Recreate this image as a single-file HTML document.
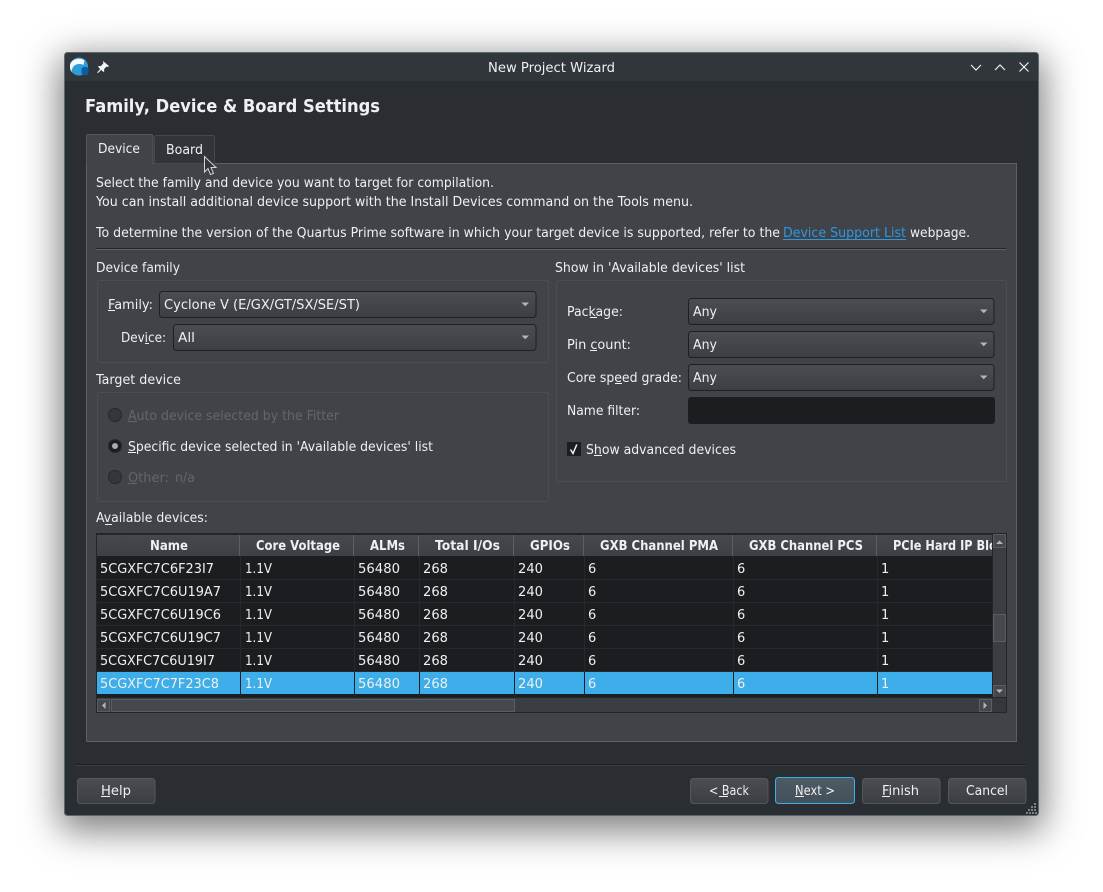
<!DOCTYPE html>
<html><head><meta charset="utf-8">
<style>
html,body{margin:0;padding:0;width:1103px;height:892px;background:#fff;overflow:hidden}
#sh{position:absolute;left:65px;top:53px;width:973px;height:762px;border-radius:4px;box-shadow:0 10px 36px 6px rgba(0,0,0,.5)}
svg{position:absolute;left:0;top:0}
text{font-family:"DejaVu Sans","Liberation Sans",sans-serif;font-size:13px;fill:#eff0f1}
.b{font-weight:bold}
.d{fill:#63676b}
.u{fill:#eff0f1}
.g{fill:none;stroke:#4a4e53}
</style></head><body>
<div id="sh"></div>
<svg width="1103" height="892" viewBox="0 0 1103 892">
<defs>
<linearGradient id="cb" x1="0" y1="0" x2="0" y2="1"><stop offset="0" stop-color="#4a4e52"/><stop offset="1" stop-color="#3b3e43"/></linearGradient>
<linearGradient id="hd" x1="0" y1="0" x2="0" y2="1"><stop offset="0" stop-color="#45484d"/><stop offset="1" stop-color="#3d4045"/></linearGradient>
<linearGradient id="nb" x1="0" y1="0" x2="0" y2="1"><stop offset="0" stop-color="#4d5b64"/><stop offset="1" stop-color="#435059"/></linearGradient>
<clipPath id="hc"><rect x="878" y="535" width="114" height="22"/></clipPath>
</defs>

<!-- window -->
<rect x="64.500" y="52.500" width="974" height="763" rx="3" fill="#2a2e32" stroke="#5a6a72"/>
<path d="M65 81V56q0-3 3-3H1035q3 0 3 3V81Z" fill="#31363b"/>
<text x="488" y="72" textLength="127" lengthAdjust="spacingAndGlyphs">New Project Wizard</text>

<!-- app icon -->
<circle cx="79" cy="66.500" r="9" fill="#2f9ed8"/>
<path d="M70.500 63c3-4.500 10-5.500 14-2.500l-1 4.500c-4-2-9-1-11 3-.7 1.300-1 3-1 4-1.500-2.500-2-6-1-9Z" fill="#f2f8fb"/>
<rect x="81.500" y="67" width="7" height="8" rx="2.500" fill="#0a5da8"/>
<!-- pin -->
<path d="M103 61l6 5-1 1-1.500-.5-2.500 2.800.3 1.900-.9.800-2.200-2.100-3.200 3.200-.8-.7 3-3.300-2.100-2.400.9-.8 1.800.2 2.600-2.800-.4-1.600Z" fill="#f4f5f5"/>
<!-- window buttons -->
<path d="M971 65l5 5 5-5M995 70l5-5 5 5M1019.500 62.500l9 9M1028.500 62.500l-9 9" fill="none" stroke="#eff0f1" stroke-width="1.200"/>

<text class="b" x="85" y="112" textLength="295" lengthAdjust="spacingAndGlyphs" style="font-size:18px">Family, Device &amp; Board Settings</text>

<!-- panel -->
<rect x="86.500" y="163.500" width="930" height="578" fill="#404348" stroke="#5c6065"/>
<!-- tabs -->
<path d="M154.500 163.500V138q0-2.500 2-2.500H213q1.500 0 1.500 2.500V163.500Z" fill="#31353a" stroke="#45494d"/>
<path d="M86.500 164V136.500q0-2 2-2H151q2 0 2 2V164Z" fill="#404348" stroke="#54585c"/>
<rect x="87" y="162" width="65.500" height="3" fill="#404348"/>
<text x="98" y="153" textLength="42" lengthAdjust="spacingAndGlyphs">Device</text>
<text x="166" y="154" textLength="37" lengthAdjust="spacingAndGlyphs">Board</text>

<text x="96" y="187" textLength="398" lengthAdjust="spacingAndGlyphs">Select the family and device you want to target for compilation.</text>
<text x="96" y="206" textLength="597" lengthAdjust="spacingAndGlyphs">You can install additional device support with the Install Devices command on the Tools menu.</text>
<text x="96" y="237" textLength="684" lengthAdjust="spacingAndGlyphs">To determine the version of the Quartus Prime software in which your target device is supported, refer to the</text>
<text x="783" y="237" textLength="123" lengthAdjust="spacingAndGlyphs" style="fill:#2f97e0">Device Support List</text>
<rect x="783" y="239" width="123" height="1" fill="#2f97e0"/>
<text x="910" y="237" textLength="60" lengthAdjust="spacingAndGlyphs">webpage.</text>
<rect x="96" y="248" width="910" height="1" fill="#232629"/>
<rect x="96" y="249" width="910" height="1" fill="#5f6368"/>

<!-- group device family -->
<text x="96" y="272" textLength="84" lengthAdjust="spacingAndGlyphs">Device family</text>
<rect x="97.500" y="280.500" width="451" height="82" rx="2" class="g"/>
<text x="108" y="309" textLength="45" lengthAdjust="spacingAndGlyphs">Family:</text>
<rect x="108" y="310" width="7" height="1" class="u"/>
<rect x="159.500" y="291.500" width="376.500" height="26" rx="3" fill="url(#cb)" stroke="#1d2023"/>
<text x="164" y="309" textLength="196" lengthAdjust="spacingAndGlyphs">Cyclone V (E/GX/GT/SX/SE/ST)</text>
<path d="M521.500 302.500h7.500l-3.750 3.800Z" fill="#b4b6b8"/>
<text x="121" y="342" textLength="45" lengthAdjust="spacingAndGlyphs">Device:</text>
<rect x="145" y="343" width="4" height="1" class="u"/>
<rect x="173.500" y="324.500" width="362.500" height="26" rx="3" fill="url(#cb)" stroke="#1d2023"/>
<text x="178" y="342" textLength="17" lengthAdjust="spacingAndGlyphs">All</text>
<path d="M521.500 335.500h7.500l-3.750 3.800Z" fill="#b4b6b8"/>

<!-- group target device -->
<text x="96" y="384" textLength="85" lengthAdjust="spacingAndGlyphs">Target device</text>
<rect x="97.500" y="392.500" width="451" height="109" rx="2" class="g"/>
<circle cx="115" cy="415" r="6.500" fill="#33373b" stroke="#26292c"/>
<text class="d" x="128" y="420" textLength="211" lengthAdjust="spacingAndGlyphs">Auto device selected by the Fitter</text>
<rect x="128" y="421" width="9" height="1" fill="#63676b"/>
<circle cx="115" cy="446" r="6.500" fill="#1b1e20" stroke="#26292c"/>
<circle cx="115" cy="446" r="3" fill="#a9abad"/>
<text x="128" y="451" textLength="305" lengthAdjust="spacingAndGlyphs">Specific device selected in 'Available devices' list</text>
<rect x="128" y="452" width="8" height="1" class="u"/>
<circle cx="115" cy="477" r="6.500" fill="#33373b" stroke="#26292c"/>
<text class="d" x="128" y="482" textLength="41" lengthAdjust="spacingAndGlyphs">Other:</text>
<text class="d" x="175" y="482" textLength="20" lengthAdjust="spacingAndGlyphs">n/a</text>
<rect x="128" y="483" width="9" height="1" fill="#63676b"/>

<!-- group show in -->
<text x="555" y="272" textLength="190" lengthAdjust="spacingAndGlyphs">Show in 'Available devices' list</text>
<rect x="556.500" y="280.500" width="450" height="201" rx="2" class="g"/>
<text x="567" y="316" textLength="56" lengthAdjust="spacingAndGlyphs">Package:</text>
<rect x="590" y="317" width="7" height="1" class="u"/>
<rect x="688.500" y="298.500" width="305.500" height="26" rx="3" fill="url(#cb)" stroke="#1d2023"/>
<text x="693" y="316" textLength="24" lengthAdjust="spacingAndGlyphs">Any</text>
<path d="M980 309.500h7.500l-3.750 3.800Z" fill="#b4b6b8"/>
<text x="567" y="349" textLength="64" lengthAdjust="spacingAndGlyphs">Pin count:</text>
<rect x="590" y="350" width="7" height="1" class="u"/>
<rect x="688.500" y="331.500" width="305.500" height="26" rx="3" fill="url(#cb)" stroke="#1d2023"/>
<text x="693" y="349" textLength="24" lengthAdjust="spacingAndGlyphs">Any</text>
<path d="M980 342.500h7.500l-3.750 3.800Z" fill="#b4b6b8"/>
<text x="567" y="382" textLength="115" lengthAdjust="spacingAndGlyphs">Core speed grade:</text>
<rect x="615" y="383" width="7" height="1" class="u"/>
<rect x="688.500" y="364.500" width="305.500" height="26" rx="3" fill="url(#cb)" stroke="#1d2023"/>
<text x="693" y="382" textLength="24" lengthAdjust="spacingAndGlyphs">Any</text>
<path d="M980 375.500h7.500l-3.750 3.800Z" fill="#b4b6b8"/>
<text x="567" y="415" textLength="73" lengthAdjust="spacingAndGlyphs">Name filter:</text>
<rect x="688" y="397" width="307" height="27" rx="3" fill="#1b1e20"/>
<rect x="567" y="442" width="14" height="14" fill="#1b1e20"/>
<path d="M570.500 449.500l2.500 4 3.800-9" fill="none" stroke="#eff0f1" stroke-width="1.500"/>
<text x="586" y="454" textLength="150" lengthAdjust="spacingAndGlyphs">Show advanced devices</text>
<rect x="594" y="455" width="8" height="1" class="u"/>

<!-- table -->
<text x="96" y="522" textLength="112" lengthAdjust="spacingAndGlyphs">Available devices:</text>
<rect x="105" y="524" width="7" height="1" class="u"/>
<rect x="96.500" y="533.500" width="910" height="179" fill="#1b1e20" stroke="#232629"/>
<rect x="97" y="535" width="895" height="21" fill="url(#hd)"/>
<rect x="97" y="534" width="909" height="1" fill="#232629"/>
<g fill="#5c6065">
<rect x="239" y="535" width="1" height="21"/><rect x="353" y="535" width="1" height="21"/><rect x="418" y="535" width="1" height="21"/><rect x="513" y="535" width="1" height="21"/><rect x="583" y="535" width="1" height="21"/><rect x="732" y="535" width="1" height="21"/><rect x="876" y="535" width="1" height="21"/>
</g>
<text class="b" x="150" y="550" textLength="38" lengthAdjust="spacingAndGlyphs">Name</text>
<text class="b" x="256" y="550" textLength="84" lengthAdjust="spacingAndGlyphs">Core Voltage</text>
<text class="b" x="370" y="550" textLength="35" lengthAdjust="spacingAndGlyphs">ALMs</text>
<text class="b" x="435" y="550" textLength="65" lengthAdjust="spacingAndGlyphs">Total I/Os</text>
<text class="b" x="530" y="550" textLength="40" lengthAdjust="spacingAndGlyphs">GPIOs</text>
<text class="b" x="600" y="550" textLength="118" lengthAdjust="spacingAndGlyphs">GXB Channel PMA</text>
<text class="b" x="749" y="550" textLength="114" lengthAdjust="spacingAndGlyphs">GXB Channel PCS</text>
<g clip-path="url(#hc)"><text class="b" x="893" y="550" textLength="118" lengthAdjust="spacingAndGlyphs">PCIe Hard IP Block</text></g>

<!-- grid -->
<g fill="#26292d">
<rect x="97" y="579" width="895" height="1"/><rect x="97" y="602" width="895" height="1"/><rect x="97" y="625" width="895" height="1"/><rect x="97" y="648" width="895" height="1"/><rect x="97" y="671" width="895" height="1"/>
<rect x="240" y="556" width="1" height="141"/><rect x="354" y="556" width="1" height="141"/><rect x="419" y="556" width="1" height="141"/><rect x="514" y="556" width="1" height="141"/><rect x="584" y="556" width="1" height="141"/><rect x="733" y="556" width="1" height="141"/><rect x="877" y="556" width="1" height="141"/>
</g>
<rect x="97" y="672" width="895" height="22" fill="#3daee9"/>
<g fill="#1b1e20">
<rect x="240" y="672" width="1" height="22"/><rect x="354" y="672" width="1" height="22"/><rect x="419" y="672" width="1" height="22"/><rect x="514" y="672" width="1" height="22"/><rect x="584" y="672" width="1" height="22"/><rect x="733" y="672" width="1" height="22"/><rect x="877" y="672" width="1" height="22"/>
</g>

<text x="100" y="573" textLength="114" lengthAdjust="spacingAndGlyphs">5CGXFC7C6F23I7</text>
<text x="100" y="596" textLength="121" lengthAdjust="spacingAndGlyphs">5CGXFC7C6U19A7</text>
<text x="100" y="619" textLength="121" lengthAdjust="spacingAndGlyphs">5CGXFC7C6U19C6</text>
<text x="100" y="642" textLength="121" lengthAdjust="spacingAndGlyphs">5CGXFC7C6U19C7</text>
<text x="100" y="665" textLength="115" lengthAdjust="spacingAndGlyphs">5CGXFC7C6U19I7</text>
<text x="100" y="688" textLength="119" lengthAdjust="spacingAndGlyphs">5CGXFC7C7F23C8</text>

<text x="245" y="573" textLength="27" lengthAdjust="spacingAndGlyphs">1.1V</text>
<text x="358" y="573" textLength="42" lengthAdjust="spacingAndGlyphs">56480</text>
<text x="423" y="573" textLength="25" lengthAdjust="spacingAndGlyphs">268</text>
<text x="518" y="573" textLength="25" lengthAdjust="spacingAndGlyphs">240</text>
<text x="588" y="573">6</text><text x="737" y="573">6</text><text x="881" y="573">1</text>

<text x="245" y="596" textLength="27" lengthAdjust="spacingAndGlyphs">1.1V</text>
<text x="358" y="596" textLength="42" lengthAdjust="spacingAndGlyphs">56480</text>
<text x="423" y="596" textLength="25" lengthAdjust="spacingAndGlyphs">268</text>
<text x="518" y="596" textLength="25" lengthAdjust="spacingAndGlyphs">240</text>
<text x="588" y="596">6</text><text x="737" y="596">6</text><text x="881" y="596">1</text>

<text x="245" y="619" textLength="27" lengthAdjust="spacingAndGlyphs">1.1V</text>
<text x="358" y="619" textLength="42" lengthAdjust="spacingAndGlyphs">56480</text>
<text x="423" y="619" textLength="25" lengthAdjust="spacingAndGlyphs">268</text>
<text x="518" y="619" textLength="25" lengthAdjust="spacingAndGlyphs">240</text>
<text x="588" y="619">6</text><text x="737" y="619">6</text><text x="881" y="619">1</text>

<text x="245" y="642" textLength="27" lengthAdjust="spacingAndGlyphs">1.1V</text>
<text x="358" y="642" textLength="42" lengthAdjust="spacingAndGlyphs">56480</text>
<text x="423" y="642" textLength="25" lengthAdjust="spacingAndGlyphs">268</text>
<text x="518" y="642" textLength="25" lengthAdjust="spacingAndGlyphs">240</text>
<text x="588" y="642">6</text><text x="737" y="642">6</text><text x="881" y="642">1</text>

<text x="245" y="665" textLength="27" lengthAdjust="spacingAndGlyphs">1.1V</text>
<text x="358" y="665" textLength="42" lengthAdjust="spacingAndGlyphs">56480</text>
<text x="423" y="665" textLength="25" lengthAdjust="spacingAndGlyphs">268</text>
<text x="518" y="665" textLength="25" lengthAdjust="spacingAndGlyphs">240</text>
<text x="588" y="665">6</text><text x="737" y="665">6</text><text x="881" y="665">1</text>

<text x="245" y="688" textLength="27" lengthAdjust="spacingAndGlyphs">1.1V</text>
<text x="358" y="688" textLength="42" lengthAdjust="spacingAndGlyphs">56480</text>
<text x="423" y="688" textLength="25" lengthAdjust="spacingAndGlyphs">268</text>
<text x="518" y="688" textLength="25" lengthAdjust="spacingAndGlyphs">240</text>
<text x="588" y="688">6</text><text x="737" y="688">6</text><text x="881" y="688">1</text>

<!-- v scrollbar -->
<rect x="992" y="534" width="14" height="178" fill="#3a3d42"/>
<rect x="992" y="534" width="1" height="165" fill="#232629"/>
<rect x="993.500" y="534.500" width="12" height="13" fill="#44474c" stroke="#5a5e63"/>
<path d="M996 544h7l-3.500-3.500Z" fill="#b4b6b8"/>
<rect x="993.500" y="614.500" width="12" height="27" fill="#45484d" stroke="#5a5e63"/>
<rect x="993.500" y="685.500" width="12" height="12" fill="#44474c" stroke="#5a5e63"/>
<path d="M996 689.500h7l-3.500 3.500Z" fill="#b4b6b8"/>
<!-- h scrollbar -->
<rect x="97" y="697" width="909" height="1" fill="#232629"/>
<rect x="97" y="698" width="895" height="14" fill="#3a3d42"/>
<rect x="97.500" y="699.500" width="12" height="12" fill="#44474c" stroke="#5a5e63"/>
<path d="M105.500 702v7l-3.500-3.500Z" fill="#b4b6b8"/>
<rect x="111.500" y="699.500" width="403" height="12" fill="#45484d" stroke="#5a5e63"/>
<rect x="979.500" y="699.500" width="12" height="12" fill="#44474c" stroke="#5a5e63"/>
<path d="M983.500 702v7l3.500-3.500Z" fill="#b4b6b8"/>
<rect x="992" y="698" width="14" height="14" fill="#34373c"/>

<!-- footer -->
<rect x="76" y="764" width="950" height="1" fill="#1b1e20"/>
<rect x="76" y="765" width="950" height="1" fill="#3c4045"/>

<rect x="77.500" y="778.500" width="77.500" height="25" rx="3" fill="url(#cb)" stroke="#54585d"/>
<text x="101" y="795" textLength="30" lengthAdjust="spacingAndGlyphs">Help</text>
<rect x="101" y="796" width="9" height="1" class="u"/>
<rect x="690.500" y="778.500" width="77.500" height="25" rx="3" fill="url(#cb)" stroke="#54585d"/>
<text x="709" y="795" textLength="40" lengthAdjust="spacingAndGlyphs">&lt; Back</text>
<rect x="719" y="796" width="9" height="1" class="u"/>
<rect x="775.500" y="777.500" width="79" height="26" rx="3" fill="url(#nb)" stroke="#3daee9"/>
<text x="795" y="795" textLength="40" lengthAdjust="spacingAndGlyphs">Next &gt;</text>
<rect x="795" y="796" width="9" height="1" class="u"/>
<rect x="862.500" y="778.500" width="77.500" height="25" rx="3" fill="url(#cb)" stroke="#54585d"/>
<text x="882" y="795" textLength="37" lengthAdjust="spacingAndGlyphs">Finish</text>
<rect x="882" y="796" width="8" height="1" class="u"/>
<rect x="948.500" y="778.500" width="77.500" height="25" rx="3" fill="url(#cb)" stroke="#54585d"/>
<text x="966" y="795" textLength="42" lengthAdjust="spacingAndGlyphs">Cancel</text>

<!-- grip -->
<g fill="#7d8184">
<rect x="1034" y="803" width="2" height="2"/>
<rect x="1031" y="806" width="2" height="2"/><rect x="1034" y="806" width="2" height="2"/>
<rect x="1028" y="809" width="2" height="2"/><rect x="1031" y="809" width="2" height="2"/><rect x="1034" y="809" width="2" height="2"/>
<rect x="1026" y="812" width="2" height="2"/><rect x="1029" y="812" width="2" height="2"/><rect x="1032" y="812" width="2" height="2"/><rect x="1035" y="812" width="2" height="2"/>
</g>

<!-- cursor -->
<path d="M204.500 156.500V172l3.500-3.500 2.500 6 3-1.200-2.500-5.800h5Z" fill="#31363b" stroke="#d5d6d7" stroke-width="1"/>
</svg>
</body></html>
